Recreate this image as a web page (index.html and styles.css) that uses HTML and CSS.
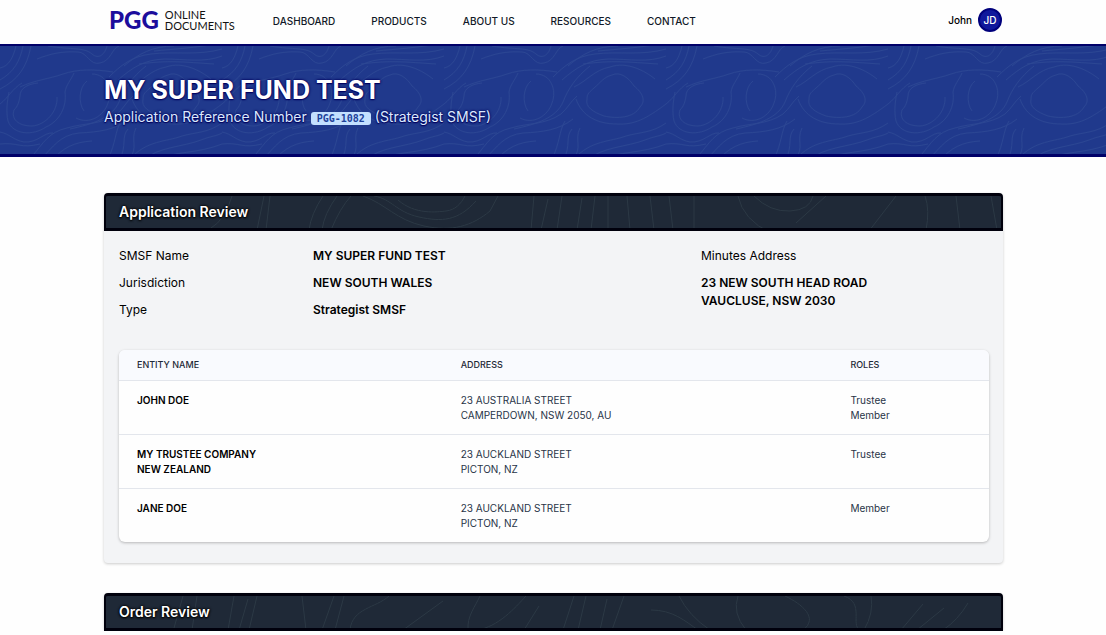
FILE: index.html
```html
<!DOCTYPE html>
<html lang="en">
<head>
<meta charset="utf-8">
<meta name="viewport" content="width=device-width, initial-scale=1">
<title>PGG Online Documents</title>
<link rel="stylesheet" href="styles.css">
</head>
<body>
<header class="topbar">
  <div class="container topbar-row">
    <a class="logo" href="#"><span class="logo-mark">PGG</span><span class="logo-text">ONLINE<br>DOCUMENTS</span></a>
    <nav class="nav">
      <a href="#">DASHBOARD</a>
      <a href="#">PRODUCTS</a>
      <a href="#">ABOUT US</a>
      <a href="#">RESOURCES</a>
      <a href="#">CONTACT</a>
    </nav>
    <button class="user" type="button"><span>John</span><span class="avatar">JD</span></button>
  </div>
</header>

<section class="banner">
  <svg class="texture" aria-hidden="true">
    <defs>
      <pattern id="contours" width="222" height="222" patternUnits="userSpaceOnUse">
        <g fill="none" stroke="currentColor" stroke-width="1">
          <path d="M150 42C157 36 160 31 168 29C176 25 185 32 190 40C199 47 202 55 196 61C190 72 173 73 160 70C149 66 141 61 143 53C143 47 146 46 150 42Z"/>
          <path d="M130 41C143 35 150 24 166 21C183 15 201 25 211 33M132 53C138 70 153 78 173 78C190 79 202 73 222 58M0 58C9 51 12 43 22 37"/>
          <path d="M20 50C20 42 28 38 38 37M57 51C58 65 46 79 32 80C18 80 11 73 14 64C18 60 19 56 20 50"/>
          <path d="M9 46C7 56 6 66 8 75C13 89 33 90 46 81C60 75 67 60 65 46C66 39 71 34 74 27"/>
          <path d="M87 35C79 41 78 57 84 65M92 28C107 28 113 44 108 57C104 70 89 79 76 72M70 83C93 78 112 72 119 56C124 43 132 31 146 20"/>
          <path d="M0 22C9 20 13 12 16 0M0 34C14 26 20 15 23 0M0 43C18 34 27 21 31 0M20 41C35 34 49 33 63 28C78 23 94 23 113 26"/>
          <path d="M37 13C50 8 61 5 78 6C87 6 90 20 100 17C111 15 112 2 119 0M48 0C72 4 84 1 92 8C99 14 105 8 107 0M109 31C120 20 132 10 151 8C174 5 198 10 222 3"/>
          <path d="M118 34C133 21 144 14 164 13C186 13 204 17 222 10M124 20C138 8 153 0 174 0M139 18C169 14 183 16 214 18M154 5C174 3 194 2 222-3"/>
          <path d="M30 113C44 96 49 86 67 82C83 77 101 79 117 68C124 62 126 56 133 50M41 113C53 101 60 89 79 87C99 86 115 84 129 73M52 114C63 102 74 96 92 95M0 86C10 88 13 94 24 96C38 97 44 86 53 87"/>
          <path d="M121 75C115 85 116 97 108 113M128 83C121 91 127 99 120 113M136 82C130 94 139 102 129 113M0 98C18 96 20 103 40 98M130 113C147 94 166 96 182 90C196 86 208 87 222 77M144 114C157 101 183 101 201 94C211 90 217 90 222 87M156 114C174 105 197 108 222 98"/>
        </g>
      </pattern>
    </defs>
    <rect width="100%" height="100%" fill="url(#contours)"/>
  </svg>
  <div class="container banner-content">
    <h1>MY SUPER FUND TEST</h1>
    <p>Application Reference Number <code>PGG-1082</code> (Strategist SMSF)</p>
  </div>
</section>

<main class="container main">
  <section class="card">
    <div class="card-head">
      <svg class="texture" aria-hidden="true">
        <g fill="none" stroke="currentColor" stroke-width="1">
          <path d="M105 32Q119 24 126 0M151 34L158 0M160 34L164 0M203 34Q205 18 217 0M216 34Q218 18 231 0M225 34Q234 12 245 0"/>
          <path d="M257 0C280 8 290 24 318 30S366 30 384 15L392 0M268 0C286 3 290 16 313 21S352 25 370 5M292 4C309 19 331 16 340 15S355 8 359 0"/>
          <path d="M425 34L428 0M435 34L442 3M451 34L456 0M471 34L476 2M485 34L489 0M502 34V0M524 34L521 0M548 34L544 0M567 34L563 0M588 34V0M632 0Q637 24 665 37"/>
          <path d="M648 0Q664 16 684 15T707 0M720 0L690 27M790 0L763 35M820 34Q824 14 819 0M850 0L854 34M885 0L891 34"/>
        </g>
      </svg>
      <h2>Application Review</h2>
    </div>
    <div class="card-body">
      <div class="details">
        <div class="stack"><span>SMSF Name</span><span>Jurisdiction</span><span>Type</span></div>
        <div class="stack strong"><span>MY SUPER FUND TEST</span><span>NEW SOUTH WALES</span><span>Strategist SMSF</span></div>
        <div class="stack"><span>Minutes Address</span><address class="strong">23 NEW SOUTH HEAD ROAD<br>VAUCLUSE, NSW 2030</address></div>
      </div>
      <table class="entities">
        <thead>
          <tr><th class="col-name" scope="col">ENTITY NAME</th><th class="col-address" scope="col">ADDRESS</th><th scope="col">ROLES</th></tr>
        </thead>
        <tbody>
          <tr><td class="name">JOHN DOE</td><td>23 AUSTRALIA STREET<br>CAMPERDOWN, NSW 2050, AU</td><td>Trustee<br>Member</td></tr>
          <tr><td class="name">MY TRUSTEE COMPANY<br>NEW ZEALAND</td><td>23 AUCKLAND STREET<br>PICTON, NZ</td><td>Trustee</td></tr>
          <tr><td class="name">JANE DOE</td><td>23 AUCKLAND STREET<br>PICTON, NZ</td><td>Member</td></tr>
        </tbody>
      </table>
    </div>
  </section>

  <section class="card">
    <div class="card-head">
      <svg class="texture" aria-hidden="true">
        <g fill="none" stroke="currentColor" stroke-width="1">
          <path d="M68 32L77 0M86 34L91 0M122 34L128 0M133 34L142 3M143 34L151 0M200 34L196 0M216 34L228 0M229 34L238 0M244 34C246 12 270 12 283 0M297 34L337 5"/>
          <path d="M362 34C361 20 369 11 374 0M371 34C392 31 409 12 420 0M418 34L433 10M457 34L468 0M472 34L480 0M494 34L501 3M506 34L518 0M545 14C567 14 579 25 592 34"/>
          <path d="M573 0Q583 20 604 34M632 0Q626 17 640 34M679 0C696 8 713 22 697 34M738 0C759 7 744 29 754 34M765 0Q768 17 758 34M795 34L817 8M811 34L838 12M837 34Q852 24 862 7"/>
        </g>
      </svg>
      <h2>Order Review</h2>
    </div>
  </section>
</main>
</body>
</html>
```
FILE: styles.css
```css
* { box-sizing: border-box; }

body {
  margin: 0;
  background: #fefefe;
  color: #000;
  font-family: Inter, "Liberation Sans", sans-serif;
  font-size: 12px;
  line-height: 18px;
}

.container {
  max-width: 900px;
  margin: 0 auto;
}

.topbar-row {
  display: flex;
  align-items: center;
  height: 44px;
  padding: 0 1px 4px 6px;
}

.topbar a { color: #111827; text-decoration: none; }

.topbar .logo {
  display: flex;
  align-items: center;
  gap: 6px;
  margin-right: 38px;
  color: #111;
  font-family: Lato, sans-serif;
}

.topbar .logo-mark {
  color: #1c0d9c;
  font-size: 24px;
  font-weight: 900;
  line-height: 28px;
}

.logo-text { font-size: 11px; line-height: 11px; }

.nav { display: flex; gap: 36px; padding-top: 2px; font-size: 10px; font-weight: 500; }

.user {
  display: flex;
  align-items: center;
  gap: 6px;
  margin-left: auto;
  padding: 0;
  border: 0;
  background: none;
  color: #000;
  font: 500 10px/18px Inter, sans-serif;
}

.avatar {
  width: 24px;
  height: 24px;
  border: 2px solid #00007c;
  border-radius: 50%;
  background: #10189c;
  color: #fff;
  line-height: 20px;
  text-align: center;
}

.texture {
  position: absolute;
  inset: 0;
  width: 100%;
  height: 100%;
}

.banner {
  position: relative;
  border-top: 2px solid #000068;
  border-bottom: 3px solid #000068;
  background: #20398c;
  color: #2b4693;
}

.banner-content {
  position: relative;
  padding: 29px 1px 25px;
  color: #fff;
  text-shadow: 0 0 2px #00005f, 0 1px 1px #00005f, 0 0 3px #00005f;
}

.banner h1 {
  margin: 0;
  font-size: 25px;
  font-weight: 700;
  line-height: 30px;
}

.banner p {
  margin: 0;
  color: #dbeafe;
  font-size: 14px;
  line-height: 24px;
}

.banner code {
  display: inline-block;
  padding: 0 6px;
  border-radius: 3px;
  background: #c3e0ff;
  color: #1e429a;
  font: 700 10px/13px "DejaVu Sans Mono", monospace;
  text-shadow: none;
}

.main {
  display: flex;
  flex-direction: column;
  gap: 30px;
  padding: 36px 0 0 1px;
}

.card {
  border-radius: 4px;
  background: #f3f4f6;
  box-shadow: 0 1px 3px rgba(0, 0, 0, 0.2);
}

.card-head {
  position: relative;
  overflow: hidden;
  padding: 7px 12px 7px 13px;
  border: 2px solid #00000c;
  border-top-width: 3px;
  border-bottom-width: 3px;
  border-radius: 4px 4px 0 0;
  background: #1f2937;
  color: #2c3945;
}

.card-head h2 {
  position: relative;
  margin: 0;
  color: #fff;
  font-size: 14px;
  font-weight: 600;
  line-height: 18px;
  text-shadow: 0 0 2px #000, 0 1px 2px #000, 0 0 3px #000;
}

.card-body { padding: 16px 14px 21px 15px; }

.details {
  display: grid;
  grid-template-columns: 22.3% 44.6% 1fr;
  margin-bottom: 31px;
}

.stack {
  display: flex;
  flex-direction: column;
  gap: 9px;
}

.strong { font-style: normal; font-weight: 600; }

.entities {
  width: 100%;
  table-layout: fixed;
  border-spacing: 0;
  border-radius: 6px;
  background: #fefefe;
  box-shadow: 0 1px 3px rgba(0, 0, 0, 0.25);
  color: #283447;
  font-size: 10px;
  line-height: 15px;
}

.entities th {
  padding: 9px 18px;
  background: #f9fafe;
  color: #1f2937;
  font-size: 9px;
  font-weight: 500;
  line-height: 12px;
  text-align: left;
}

.entities th:first-child { border-top-left-radius: 6px; }
.entities th:last-child { border-top-right-radius: 6px; }

.col-name { width: 37.2%; }
.col-address { width: 44.8%; }

.entities td {
  padding: 12px 18px 11px;
  border-top: 1px solid #e3e6ec;
  vertical-align: top;
}

.entities .name { color: #000; font-weight: 600; }
```
